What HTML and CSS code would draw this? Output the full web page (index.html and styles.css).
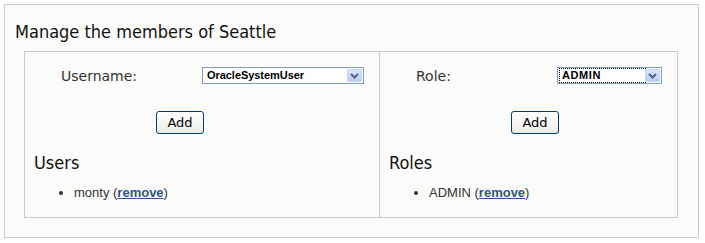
FILE: index.html
```html
<!DOCTYPE html>
<html lang="en">
<head>
    <meta charset="UTF-8">
    <title>Manage members</title>
    <link rel="stylesheet" href="styles.css">
</head>
<body>
    <div class="panel">
        <h1>Manage the members of Seattle</h1>
        <div class="members">
            <div class="column">
                <div class="form-row">
                    <label class="label">Username:</label>
                    <div class="select select-user">
                        <span class="value">OracleSystemUser</span>
                        <span class="arrow"><svg width="9" height="6" viewBox="0 0 9 6"><path d="M1 1 L4.5 4.5 L8 1" fill="none" stroke="#4d6185" stroke-width="2"/></svg></span>
                    </div>
                </div>
                <button class="add">Add</button>
                <h2>Users</h2>
                <ul>
                    <li>monty (<a href="#">remove</a>)</li>
                </ul>
            </div>
            <div class="column">
                <div class="form-row">
                    <label class="label">Role:</label>
                    <div class="select select-role">
                        <span class="value focused">ADMIN</span>
                        <span class="arrow"><svg width="9" height="6" viewBox="0 0 9 6"><path d="M1 1 L4.5 4.5 L8 1" fill="none" stroke="#4d6185" stroke-width="2"/></svg></span>
                    </div>
                </div>
                <button class="add">Add</button>
                <h2>Roles</h2>
                <ul>
                    <li>ADMIN (<a href="#">remove</a>)</li>
                </ul>
            </div>
        </div>
    </div>
</body>
</html>
```

FILE: styles.css
```css
body {
    margin: 4px;
    background: #ffffff;
    font-family: 'DejaVu Sans', Verdana, sans-serif;
    color: #333333;
}

.panel {
    width: 695px;
    height: 234px;
    box-sizing: border-box;
    border: 1px solid #cccccc;
    background: #fbfcfa;
    padding: 0 9px;
}

h1 {
    font-family: 'DejaVu Sans Condensed', 'DejaVu Sans', sans-serif;
    font-stretch: condensed;
    font-size: 18px;
    font-weight: normal;
    color: #111111;
    margin: 17px 0 9px 1px;
    line-height: 20px;
}

.members {
    display: grid;
    grid-template-columns: 354px 1fr;
    width: 654px;
    height: 167px;
    box-sizing: border-box;
    margin-left: 10px;
    border: 1px solid #cccccc;
}

.column {
    padding-top: 15px;
}

.column + .column {
    border-left: 1px solid #cccccc;
}

.form-row {
    display: flex;
    align-items: center;
    height: 17px;
}

.label {
    width: 141px;
    padding-left: 36px;
    font-size: 14px;
    color: #333333;
}

.select {
    display: flex;
    align-items: center;
    justify-content: space-between;
    height: 17px;
    box-sizing: border-box;
    border: 1px solid #7f9db9;
    background: #ffffff;
    padding: 0 1px 0 2px;
}

.select-user {
    width: 162px;
}

.select-role {
    width: 105px;
}

.value {
    font-family: 'Liberation Sans', Arial, sans-serif;
    font-size: 11px;
    font-weight: bold;
    color: #000000;
    letter-spacing: -0.05px;
    line-height: 13px;
    padding: 0 2px;
}

.value.focused {
    outline: 1px dotted #000000;
    width: 84px;
    letter-spacing: 0.6px;
}

.arrow {
    display: flex;
    align-items: center;
    justify-content: center;
    width: 15px;
    height: 13px;
    border-radius: 1px;
    background: linear-gradient(#dde7fb, #b8cbf3);
    border: 1px solid #c3d3fd;
    box-sizing: border-box;
}

.add {
    display: block;
    margin: 27px 0 0 131px;
    width: 48px;
    height: 23px;
    border: 1px solid #003c74;
    border-radius: 3px;
    background: linear-gradient(#ffffff, #ecebe6);
    font-family: 'DejaVu Sans', Verdana, sans-serif;
    font-size: 13px;
    color: #000000;
    padding: 0;
}

h2 {
    font-family: 'DejaVu Sans Condensed', 'DejaVu Sans', sans-serif;
    font-stretch: condensed;
    font-size: 18px;
    font-weight: normal;
    color: #111111;
    margin: 18px 0 0 9px;
    line-height: 22px;
}

ul {
    margin: 11px 0 0;
    padding-left: 49px;
    font-family: 'Liberation Sans', Arial, sans-serif;
    font-size: 13px;
    color: #333333;
}

li {
    line-height: 16px;
}

a {
    color: #2e5397;
    font-weight: bold;
}
```
